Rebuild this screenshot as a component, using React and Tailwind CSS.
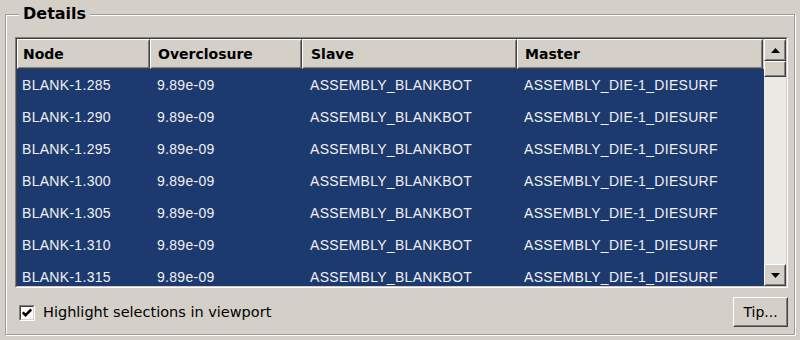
import React from "react";

const rows = ["285", "290", "295", "300", "305", "310", "315"];

function Arrow({ up }) {
  return (
    <svg width="9" height="5" viewBox="0 0 9 5">
      {up ? <polygon points="0,5 9,5 4.5,0" fill="#000" /> : <polygon points="0,0 9,0 4.5,5" fill="#000" />}
    </svg>
  );
}

function RaisedBtn({ children, className }) {
  return (
    <div className={"border border-t-white border-l-white border-b-[#404040] border-r-[#404040] bg-[#d4d0c8] " + className}>
      <div className="w-full h-full border border-t-[#d4d0c8] border-l-[#d4d0c8] border-b-[#808080] border-r-[#808080] flex items-center justify-center">
        {children}
      </div>
    </div>
  );
}

function HeadCell({ w, children, pl }) {
  return (
    <div className={"h-full shrink-0 border border-t-white border-l-white border-b-[#404040] border-r-[#404040] " + w}>
      <div className={"h-full border border-transparent border-b-[#808080] border-r-[#808080] flex items-center " + pl}>
        {children}
      </div>
    </div>
  );
}

export default function App() {
  return (
    <div className="w-[800px] h-[340px] bg-[#d4d0c8] pt-[14px] pl-[5px] font-['Liberation_Sans',sans-serif] text-black overflow-hidden">
      <div className="relative w-[790px] h-[321px] border border-[#a09d96] shadow-[inset_1px_1px_0_#fff,1px_1px_0_#fff] pt-[22px] pl-[9px] pr-[6px]">
        <div className="absolute left-[13px] top-[-11px] px-[4px] bg-[#d4d0c8] font-['DejaVu_Sans',sans-serif] font-bold text-[16px] leading-[20px]">
          Details
        </div>
        <div className="h-[251px] border border-t-[#808080] border-l-[#808080] border-b-white border-r-white">
          <div className="h-full border border-t-[#404040] border-l-[#404040] border-b-[#d4d0c8] border-r-[#d4d0c8] flex">
            <div className="flex-1 flex flex-col overflow-hidden">
              <div className="h-[30px] flex bg-[#d4d0c8] font-['DejaVu_Sans',sans-serif] font-bold text-[14px] shrink-0">
                <HeadCell w="w-[133px]" pl="pl-[4px]">Node</HeadCell>
                <HeadCell w="w-[152px]" pl="pl-[6px]">Overclosure</HeadCell>
                <HeadCell w="w-[215px]" pl="pl-[7px]">Slave</HeadCell>
                <HeadCell w="w-[246px]" pl="pl-[6px]">Master</HeadCell>
              </div>
              <div className="flex-1 bg-[#1d3a6f] overflow-hidden text-[14px] tracking-[0.3px] text-[#f0f0f4]">
                {rows.map((r) => (
                  <div key={r} className="h-[32px] flex items-center">
                    <div className="w-[133px] pl-[5px] shrink-0">BLANK-1.{r}</div>
                    <div className="w-[152px] pl-[7px] shrink-0">9.89e-09</div>
                    <div className="w-[215px] pl-[8px] shrink-0">ASSEMBLY_BLANKBOT</div>
                    <div className="w-[246px] pl-[7px] shrink-0">ASSEMBLY_DIE-1_DIESURF</div>
                  </div>
                ))}
              </div>
            </div>
            <div className="w-[22px] flex flex-col bg-[#ebe9e4] shrink-0">
              <RaisedBtn className="h-[22px] shrink-0"><Arrow up /></RaisedBtn>
              <RaisedBtn className="h-[16px] shrink-0"></RaisedBtn>
              <div className="flex-1" />
              <RaisedBtn className="h-[22px] shrink-0"><Arrow /></RaisedBtn>
            </div>
          </div>
        </div>
        <div className="flex items-center justify-between mt-[9px]">
          <div className="flex items-center pl-[4px] gap-[8px] pt-[2px]">
            <div className="w-[16px] h-[16px] border border-t-[#808080] border-l-[#808080] border-b-white border-r-white">
              <div className="w-full h-full border border-t-[#404040] border-l-[#404040] border-b-[#d4d0c8] border-r-[#d4d0c8] bg-white flex items-center justify-center">
                <svg width="10" height="10" viewBox="0 0 7 7">
                  <polyline points="0.5,3 2.5,5 6.5,1" fill="none" stroke="#000" strokeWidth="1.8" />
                </svg>
              </div>
            </div>
            <span className="font-['DejaVu_Sans',sans-serif] text-[14.5px]">Highlight selections in viewport</span>
          </div>
          <RaisedBtn className="w-[55px] h-[30px] font-['DejaVu_Sans',sans-serif] text-[14px]">Tip...</RaisedBtn>
        </div>
      </div>
    </div>
  );
}
